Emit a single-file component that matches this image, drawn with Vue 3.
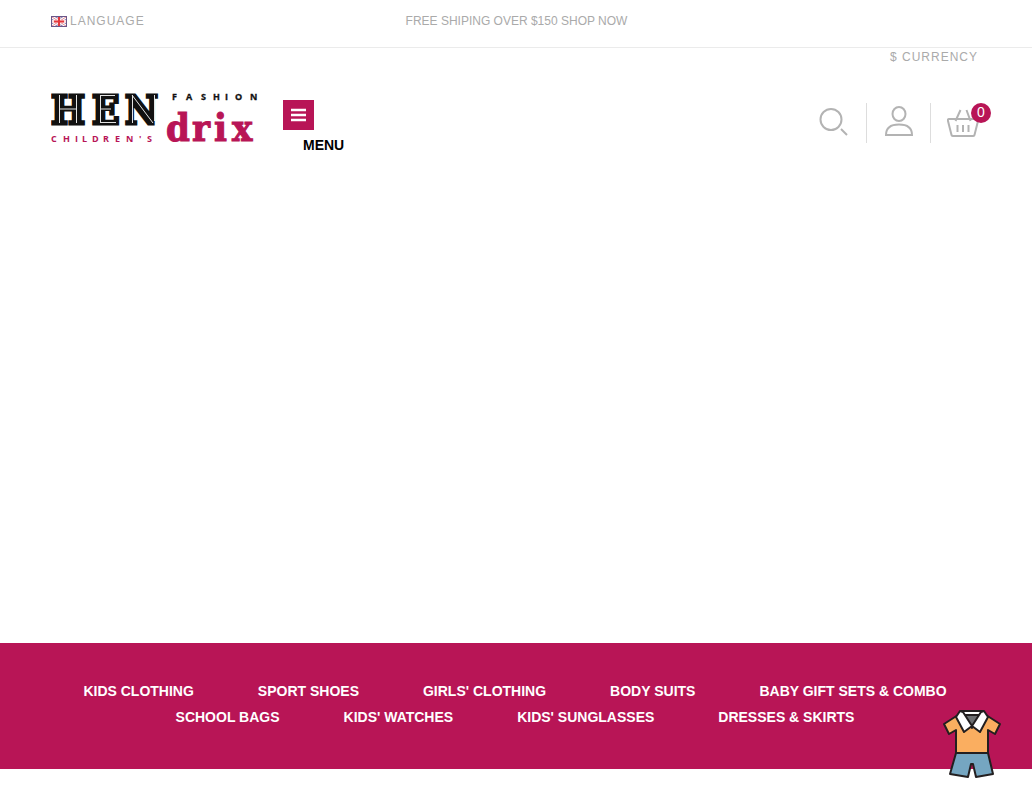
<script setup>
const categories = [
  'KIDS CLOTHING', 'SPORT SHOES', "GIRLS' CLOTHING", 'BODY SUITS', 'BABY GIFT SETS & COMBO',
  'SCHOOL BAGS', "KIDS' WATCHES", "KIDS' SUNGLASSES", 'DRESSES & SKIRTS',
]
</script>

<template>
  <div class="page">
    <div class="topbar">
      <button class="pick" type="button">
        <svg class="flag" viewBox="0 0 16 11" width="16" height="11" aria-hidden="true">
          <rect width="16" height="11" fill="#8d86b4" />
          <path d="M1 1L15 10M15 1L1 10" stroke="#fff" stroke-width="3" />
          <path d="M1 1L15 10M15 1L1 10" stroke="#e58a94" stroke-width="1" />
          <path d="M8 1V10M1 5.500H15" stroke="#fbdcdc" stroke-width="3" />
          <path d="M8 1V10M3 5.500H13" stroke="#e5383d" stroke-width="2" />
          <rect x=".5" y=".5" width="15" height="10" fill="none" stroke="#6a5688" />
        </svg>
        <span>LANGUAGE</span>
      </button>
      <p class="promo">FREE SHIPING OVER $150 SHOP NOW</p>
    </div>
    <div class="currency"><button class="pick" type="button">$ CURRENCY</button></div>

    <header class="header">
      <a class="logo" href="#" aria-label="Hendrix children's fashion">
        <svg viewBox="0 -8 216 72" width="216" height="72">
          <text class="hen" x="0 41 74" y="32">HEN</text>
          <path class="inline" d="M8.500 3V31M25.500 3V31M8.500 17H25.500M49.500 3V31M49 3.500H64M49 17H60M49 30.500H65M81.500 3V31M81 3L102 31M103.500 3V29" />
          <text class="tiny dark" x="121 135 150 162 174 184 199" y="8">FASHION</text>
          <text class="tiny pink" x="0 12 24 31 41 52 64 75 88 96" y="50">CHILDREN'S</text>
          <text class="drix" x="115 141 163 181" y="49">drix</text>
        </svg>
      </a>
      <div class="menu">
        <button type="button" class="menu-btn" aria-label="Open menu">
          <svg viewBox="0 0 15 14" width="15" height="14" aria-hidden="true">
            <path d="M0 2H15M0 7H15M0 12H15" stroke="#fff" stroke-width="2.500" />
          </svg>
        </button>
        <span class="menu-label">MENU</span>
      </div>
      <nav class="tools" aria-label="Account tools">
        <button type="button" class="tool" aria-label="Search">
          <svg viewBox="0 0 32 32" width="32" height="32">
            <circle cx="13" cy="13.500" r="10.500" />
            <path d="M23 23L29 29" />
          </svg>
        </button>
        <button type="button" class="tool" aria-label="Account">
          <svg viewBox="0 0 32 32" width="32" height="32">
            <ellipse cx="16" cy="8" rx="6.500" ry="7" />
            <path d="M3 29C3 22 8 18.500 16 18.500S29 22 29 29Z" />
          </svg>
        </button>
        <button type="button" class="tool" aria-label="Basket">
          <svg viewBox="0 0 32 32" width="32" height="32">
            <path d="M2 13Q.5 13 1 15L4.500 29Q5 30 6 30H26Q27 30 27.500 29L31 15Q31.500 13 30 13Z M8.500 15L13.500 4M23.500 15L19.500 4M10.500 19V26M16 19V26M21.500 19V26" />
          </svg>
          <span class="badge">0</span>
        </button>
      </nav>
    </header>

    <main class="stage"></main>

    <nav class="categories" aria-label="Categories">
      <a v-for="name in categories" :key="name" href="#">{{ name }}</a>
    </nav>

    <button type="button" class="outfit" aria-label="Outfits">
      <svg viewBox="0 0 60 70" width="60" height="70">
        <g stroke="#231f20" stroke-width="2" stroke-linejoin="round">
          <path d="M14 44H46L51 65L34 68L31 55H29L26 68L8 65Z" fill="#75a6c1" />
          <path d="M16 6L2 15L7 25L14 21V44H46V21L53 25L58 15L44 6Z" fill="#faae60" />
          <path d="M19 5H41L30 19Z" fill="#6d6e71" />
          <path d="M19 2H41L38 6H22Z" fill="#fff" />
          <path d="M18 2L14 8L22 23L30 17L21 3Z" fill="#fff" />
          <path d="M42 2L46 8L38 23L30 17L39 3Z" fill="#fff" />
        </g>
      </svg>
    </button>
  </div>
</template>

<style>
body { margin: 0; background: #fff; }
</style>

<style scoped>
.page {
  display: flex;
  flex-direction: column;
  min-height: 100vh;
  box-sizing: border-box;
  padding-bottom: 31px;
  font-family: "Liberation Sans", Arial, sans-serif;
}
button {
  padding: 0;
  border: 0;
  background: none;
  font-family: inherit;
  cursor: pointer;
}
.topbar {
  display: grid;
  grid-template-columns: 1fr auto 1fr;
  align-items: center;
  padding: 13px 50px 17px 51px;
  border-bottom: 1px solid #ebebeb;
  line-height: 17px;
}
.pick {
  display: flex;
  align-items: center;
  gap: 3px;
  color: #aaa;
  font-size: 12px;
  line-height: 17px;
  letter-spacing: 1px;
}
.promo {
  margin: 0;
  color: #aaa;
  font-size: 12px;
}
.currency {
  display: flex;
  justify-content: flex-end;
  padding: 1px 54px 0 0;
}
.header {
  display: flex;
  align-items: flex-start;
  padding: 18px 38px 0 51px;
}
.logo, .logo svg { display: block; }
.hen {
  font: bold 40px "DejaVu Serif Condensed", "DejaVu Serif", serif;
  fill: #111;
  stroke: #111;
  stroke-width: 3;
}
.inline { fill: none; stroke: #e4e4e4; stroke-width: 1; }
.tiny { font: bold 9px "Open Sans", sans-serif; }
.dark { fill: #111; stroke: #111; stroke-width: .3; }
.pink { fill: #b81556; }
.drix {
  font: bold 38px "DejaVu Serif Condensed", "DejaVu Serif", serif;
  fill: #b81556;
  stroke: #b81556;
  stroke-width: 1;
}
.menu { padding: 16px 0 0 16px; }
.menu-btn {
  display: flex;
  align-items: center;
  justify-content: center;
  width: 31px;
  height: 30px;
  background: #b81556;
}
.menu-label {
  display: block;
  padding: 6px 0 0 20px;
  color: #000;
  font-size: 14px;
  font-weight: bold;
  line-height: 18px;
}
.tools {
  display: flex;
  margin-left: auto;
  padding-top: 19px;
}
.tool {
  position: relative;
  display: flex;
  align-items: center;
  justify-content: center;
  width: 64px;
  height: 40px;
  padding-bottom: 2px;
}
.tool + .tool { border-left: 1px solid #ddd; }
.tool svg {
  fill: none;
  stroke: #b3b3b3;
  stroke-width: 2;
}
.badge {
  position: absolute;
  top: 0;
  right: 3px;
  width: 20px;
  height: 20px;
  border-radius: 50%;
  background: #b81556;
  color: #fff;
  font-size: 14px;
  line-height: 18px;
}
.stage { flex: 1; }
.categories {
  display: flex;
  flex-wrap: wrap;
  justify-content: center;
  column-gap: 64px;
  padding: 35px 52px 39px 50px;
  background: #b81556;
}
.categories a {
  color: #fff;
  font-size: 14px;
  font-weight: bold;
  line-height: 26px;
  text-decoration: none;
}
.outfit {
  position: fixed;
  right: 30px;
  bottom: 21px;
}
.outfit svg { display: block; }
</style>
